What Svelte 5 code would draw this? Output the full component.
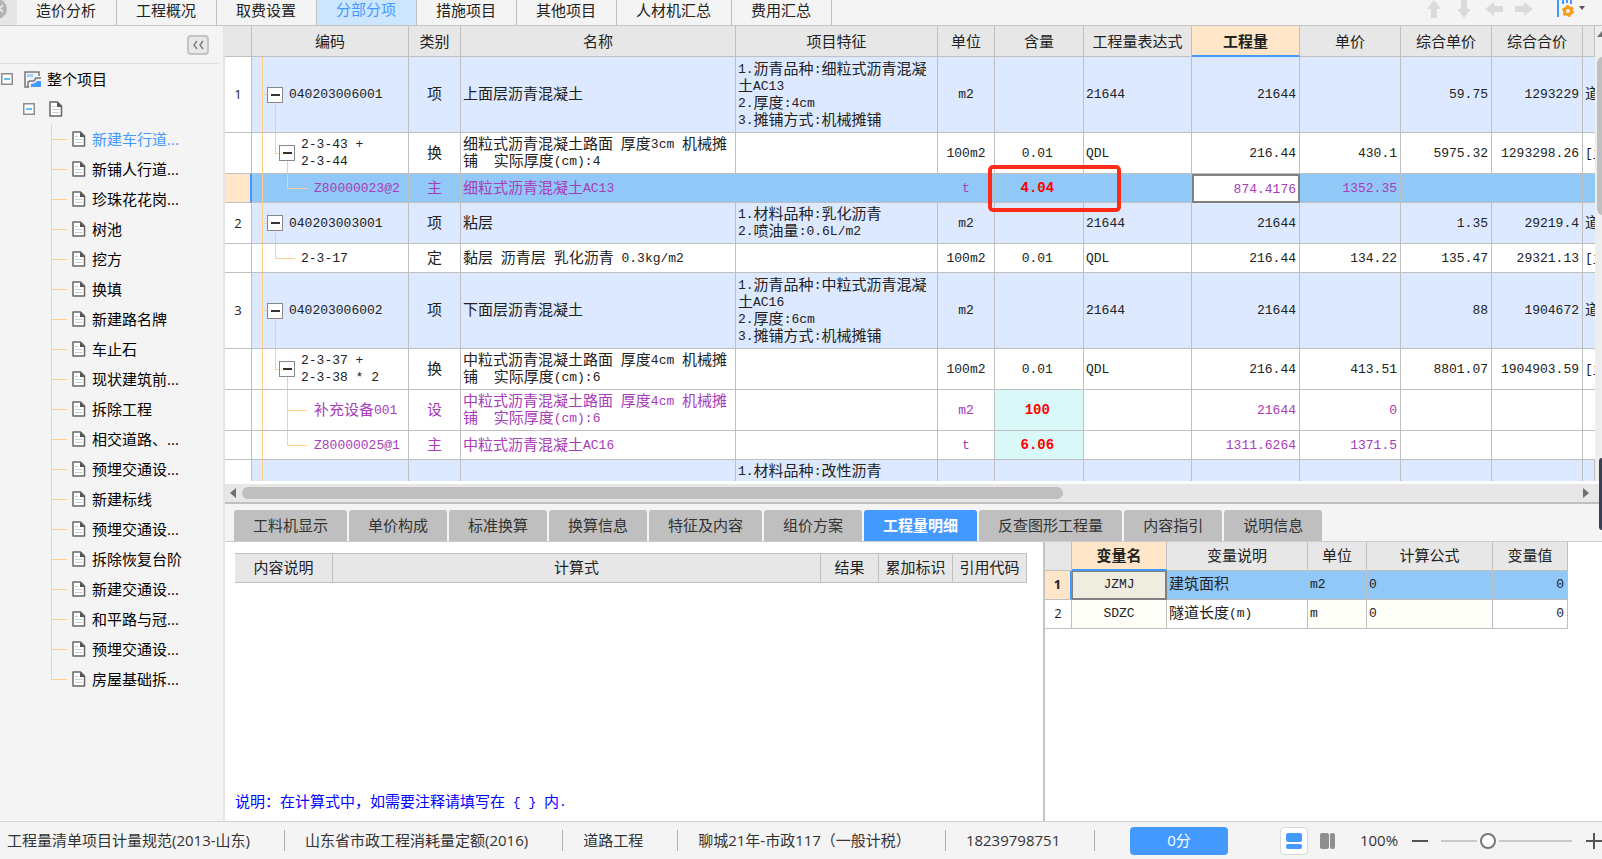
<script lang="ts">
    type Row = {
        no?: string;
        level: 1 | 2 | 3;
        open?: boolean;
        last?: boolean;
        code: string[];
        kind: string;
        name: string[];
        features?: string[];
        unit: string;
        content?: string;
        expr?: string;
        qty?: string;
        price?: string;
        unitPrice?: string;
        total?: string;
        rest?: string;
        selected?: boolean;
    };

    const topTabs = ["造价分析", "工程概况", "取费设置", "分部分项", "措施项目", "其他项目", "人材机汇总", "费用汇总"];
    let activeTop = $state("分部分项");

    const tree = [
        "新建车行道...", "新铺人行道...", "珍珠花花岗...", "树池", "挖方", "换填", "新建路名牌",
        "车止石", "现状建筑前...", "拆除工程", "相交道路、...", "预埋交通设...", "新建标线",
        "预埋交通设...", "拆除恢复台阶", "新建交通设...", "和平路与冠...", "预埋交通设...", "房屋基础拆...",
    ];
    let activeNode = $state(0);

    const columns = ["", "编码", "类别", "名称", "项目特征", "单位", "含量", "工程量表达式", "工程量", "单价", "综合单价", "综合合价", ""];

    const rows: Row[] = [
        { no: "1", level: 1, open: true, code: ["040203006001"], kind: "项", name: ["上面层沥青混凝土"], features: ["1.沥青品种:细粒式沥青混凝", "土AC13", "2.厚度:4cm", "3.摊铺方式:机械摊铺"], unit: "m2", expr: "21644", qty: "21644", unitPrice: "59.75", total: "1293229", rest: "道" },
        { level: 2, open: true, code: ["2-3-43 +", "2-3-44"], kind: "换", name: ["细粒式沥青混凝土路面 厚度3cm 机械摊", "铺  实际厚度(cm):4"], unit: "100m2", content: "0.01", expr: "QDL", qty: "216.44", price: "430.1", unitPrice: "5975.32", total: "1293298.26", rest: "[土" },
        { level: 3, last: true, code: ["Z80000023@2"], kind: "主", name: ["细粒式沥青混凝土AC13"], unit: "t", content: "4.04", qty: "874.4176", price: "1352.35", selected: true },
        { no: "2", level: 1, open: true, code: ["040203003001"], kind: "项", name: ["粘层"], features: ["1.材料品种:乳化沥青", "2.喷油量:0.6L/m2"], unit: "m2", expr: "21644", qty: "21644", unitPrice: "1.35", total: "29219.4", rest: "道" },
        { level: 2, code: ["2-3-17"], kind: "定", name: ["黏层 沥青层 乳化沥青 0.3kg/m2"], unit: "100m2", content: "0.01", expr: "QDL", qty: "216.44", price: "134.22", unitPrice: "135.47", total: "29321.13", rest: "[土" },
        { no: "3", level: 1, open: true, code: ["040203006002"], kind: "项", name: ["下面层沥青混凝土"], features: ["1.沥青品种:中粒式沥青混凝", "土AC16", "2.厚度:6cm", "3.摊铺方式:机械摊铺"], unit: "m2", expr: "21644", qty: "21644", unitPrice: "88", total: "1904672", rest: "道" },
        { level: 2, open: true, code: ["2-3-37 +", "2-3-38 * 2"], kind: "换", name: ["中粒式沥青混凝土路面 厚度4cm 机械摊", "铺  实际厚度(cm):6"], unit: "100m2", content: "0.01", expr: "QDL", qty: "216.44", price: "413.51", unitPrice: "8801.07", total: "1904903.59", rest: "[土" },
        { level: 3, code: ["补充设备001"], kind: "设", name: ["中粒式沥青混凝土路面 厚度4cm 机械摊", "铺  实际厚度(cm):6"], unit: "m2", content: "100", qty: "21644", price: "0" },
        { level: 3, last: true, code: ["Z80000025@1"], kind: "主", name: ["中粒式沥青混凝土AC16"], unit: "t", content: "6.06", qty: "1311.6264", price: "1371.5" },
    ];

    const detailTabs = ["工料机显示", "单价构成", "标准换算", "换算信息", "特征及内容", "组价方案", "工程量明细", "反查图形工程量", "内容指引", "说明信息"];
    let activeDetail = $state("工程量明细");

    const variables = [
        { code: "JZMJ", desc: "建筑面积", unit: "m2", formula: "0", value: "0" },
        { code: "SDZC", desc: "隧道长度(m)", unit: "m", formula: "0", value: "0" },
    ];

    const status = ["工程量清单项目计量规范(2013-山东)", "山东省市政工程消耗量定额(2016)", "道路工程", "聊城21年-市政117（一般计税）", "18239798751"];
    let zoom = $state(34);

    // half-width runs are set in the monospaced face, the rest in the CJK face
    function runs(text: string) {
        return text.match(/[\x20-\x7e]+|[^\x20-\x7e]+/g) ?? [];
    }
</script>

{#snippet mixed(text: string)}
    {#each runs(text) as run}{#if /^[\x20-\x7e]/.test(run)}<span class="half">{run}</span>{:else}{run}{/if}{/each}
{/snippet}

{#snippet lines(list: string[])}
    {#each list as line}<div class="line">{@render mixed(line)}</div>{/each}
{/snippet}

{#snippet page()}
    <svg class="page" width="14" height="16" viewBox="0 0 14 16" aria-hidden="true">
        <path d="M1 1h7.500l4 4v10H1z" fill="#fff" stroke="#666" stroke-width="1.500" stroke-linejoin="round" />
        <path d="M8 1l5 5H8z" fill="#555" />
        <path d="M3 5.500h3M3 8.500h7.500M3 11.500h7.500" stroke="#ccc" />
    </svg>
{/snippet}

{#snippet toggle()}
    <svg width="12" height="12" viewBox="0 0 12 12" aria-hidden="true">
        <rect x=".75" y=".75" width="10.500" height="10.500" fill="#fff" stroke="#8c8c8c" stroke-width="1.500" />
        <path d="M3 6h6" stroke="#2ea8e6" stroke-width="1.500" />
    </svg>
{/snippet}

<div class="app">
    <nav class="top">
        <button class="back" aria-label="向左滚动">
            <svg width="16" height="26" viewBox="0 0 16 26" aria-hidden="true">
                <circle cx="-3" cy="9" r="10" fill="#b4b4b4" />
                <path d="M0 8l3-3M0 9l3 3" fill="none" stroke="#f4f4f4" stroke-width="1.500" />
            </svg>
        </button>
        {#each topTabs as tab}
            <button class="top-tab" class:active={tab === activeTop} onclick={() => (activeTop = tab)}>{tab}</button>
        {/each}
        <div class="tools">
            {#each [["上移", 0], ["下移", 180], ["左移", 270], ["右移", 90]] as [label, angle]}
                <button aria-label={String(label)}>
                    <svg width="20" height="20" viewBox="0 0 20 20" aria-hidden="true">
                        <path d="M10 1l7 9h-4v9H7v-9H3z" fill="#dadada" transform="rotate({angle} 10 10)" />
                    </svg>
                </button>
            {/each}
            <button class="config" aria-label="列设置">
                <svg width="30" height="20" viewBox="0 0 30 20" aria-hidden="true">
                    <path d="M1 0h2v18H1zM6 0h2v5H6zM10 0h2v4h-2zM14 0h2v5h-2z" fill="#4499ff" />
                    <circle cx="12" cy="12" r="3.500" fill="none" stroke="#f99b1c" stroke-width="3" />
                    <circle cx="12" cy="12" r="5" fill="none" stroke="#f99b1c" stroke-width="2" stroke-dasharray="2.600 2.636" />
                    <path d="M23 7h6l-3 4z" fill="#555" />
                </svg>
            </button>
        </div>
    </nav>

    <div class="body">
        <aside class="side">
            <div class="side-head">
                <button class="fold" aria-label="收起">
                    <svg width="14" height="12" viewBox="0 0 14 12" aria-hidden="true">
                        <path d="M6 2L3 6l3 4M12 2L9 6l3 4" fill="none" stroke="#808080" stroke-width="1.500" />
                    </svg>
                </button>
            </div>
            <div class="node root">
                {@render toggle()}
                <svg width="17" height="17" viewBox="0 0 17 17" aria-hidden="true">
                    <path d="M15 5V1H1v15h4" fill="none" stroke="#777" stroke-width="1.500" />
                    <path d="M3 3h6v3H3z" fill="#9fd0ff" />
                    <path d="M7 16v-3l4-1 2-2h4v6z" fill="#4499ff" />
                    <path d="M4 16v-5l2-1h4l2-3h5" fill="none" stroke="#777" stroke-width="1.500" />
                </svg>
                <span>整个项目</span>
            </div>
            <div class="node second">
                {@render toggle()}
                {@render page()}
            </div>
            <ul>
                {#each tree as item, i}
                    <li>
                        <button class="leaf" class:active={i === activeNode} onclick={() => (activeNode = i)}>
                            {@render page()}
                            <span>{item}</span>
                        </button>
                    </li>
                {/each}
            </ul>
        </aside>

        <main>
            <section class="upper">
                <div class="viewport">
                    <div class="clip">
                        <table class="grid">
                            <colgroup>
                                <col class="w-no" /><col class="w-code" /><col class="w-kind" /><col />
                                <col class="w-feat" /><col class="w-unit" /><col class="w-content" /><col class="w-qty" />
                                <col class="w-qty" /><col class="w-price" /><col class="w-sum" /><col class="w-sum" /><col class="w-rest" />
                            </colgroup>
                            <thead>
                                <tr>
                                    {#each columns as column}
                                        <th class:current={column === "工程量"}>{column}</th>
                                    {/each}
                                </tr>
                            </thead>
                            <tbody>
                                {#each rows as row}
                                    <tr
                                        class:item={row.level === 1}
                                        class:material={row.level === 3}
                                        class:tall={row.features?.length === 4}
                                        class:selected={row.selected}
                                    >
                                        <td class="no">{row.no ?? ""}</td>
                                        <td class="code level-{row.level}" class:open={row.open} class:last={row.last}>
                                            <div class="code-inner">
                                                {#if row.open}<button class="box" aria-label="折叠"></button>{/if}
                                                <div>{@render lines(row.code)}</div>
                                            </div>
                                        </td>
                                        <td class="center">{row.kind}</td>
                                        <td>{@render lines(row.name)}</td>
                                        <td>{@render lines(row.features ?? [])}</td>
                                        <td class="center">{@render mixed(row.unit)}</td>
                                        <td class="center content">
                                            {@render mixed(row.content ?? "")}
                                            {#if row.selected}<span class="mark"></span>{/if}
                                        </td>
                                        <td>{@render mixed(row.expr ?? "")}</td>
                                        <td class="num qty">{@render mixed(row.qty ?? "")}</td>
                                        <td class="num">{@render mixed(row.price ?? "")}</td>
                                        <td class="num">{@render mixed(row.unitPrice ?? "")}</td>
                                        <td class="num">{@render mixed(row.total ?? "")}</td>
                                        <td class="rest">{@render mixed(row.rest ?? "")}</td>
                                    </tr>
                                {/each}
                                <tr class="item tall partial">
                                    <td class="no"></td>
                                    <td class="code"></td>
                                    <td></td>
                                    <td></td>
                                    <td>{@render mixed("1.材料品种:改性沥青")}</td>
                                    {#each Array(8) as _}<td></td>{/each}
                                </tr>
                            </tbody>
                        </table>
                    </div>
                    <div class="vbar">
                        <svg width="7" height="31" viewBox="0 0 7 31" aria-hidden="true"><path d="M2 11l5-6v6z" fill="#707070" /></svg>
                        <span></span>
                    </div>
                </div>
                <div class="hbar">
                    <span class="arrow left"></span>
                    <div class="track"><span class="thumb"></span></div>
                    <span class="arrow right"></span>
                </div>
                <span class="handle"></span>
            </section>

            <section class="lower">
                <nav class="detail-tabs">
                    {#each detailTabs as tab}
                        <button class:active={tab === activeDetail} onclick={() => (activeDetail = tab)}>{tab}</button>
                    {/each}
                </nav>
                <div class="panes">
                    <div class="formula">
                        <table>
                            <colgroup>
                                <col class="f-desc" /><col /><col class="f-result" /><col class="f-flag" /><col class="f-flag" />
                            </colgroup>
                            <thead>
                                <tr><th>内容说明</th><th>计算式</th><th>结果</th><th>累加标识</th><th>引用代码</th></tr>
                            </thead>
                        </table>
                        <p>{@render mixed("说明：在计算式中，如需要注释请填写在 { } 内.")}</p>
                    </div>
                    <div class="vars">
                        <table>
                            <colgroup>
                                <col class="v-no" /><col class="v-code" /><col class="v-desc" /><col class="v-unit" /><col class="v-formula" /><col class="v-value" />
                            </colgroup>
                            <thead>
                                <tr><th></th><th class="current">变量名</th><th>变量说明</th><th>单位</th><th>计算公式</th><th>变量值</th></tr>
                            </thead>
                            <tbody>
                                {#each variables as v, i}
                                    <tr class:selected={i === 0}>
                                        <td class="no">{i + 1}</td>
                                        <td class="center tint var-code">{@render mixed(v.code)}</td>
                                        <td>{@render mixed(v.desc)}</td>
                                        <td class="tint">{@render mixed(v.unit)}</td>
                                        <td class="tint">{@render mixed(v.formula)}</td>
                                        <td class="num">{@render mixed(v.value)}</td>
                                    </tr>
                                {/each}
                            </tbody>
                        </table>
                    </div>
                </div>
            </section>
        </main>
    </div>

    <footer>
        {#each status as text}<span class="status">{text}</span>{/each}
        <button class="score">0分</button>
        <button class="view on" aria-label="上下视图">
            <svg width="16" height="16" viewBox="0 0 16 16" aria-hidden="true">
                <rect width="16" height="9" y="0" rx="2" fill="#4499ff" />
                <rect width="16" height="5" y="11" rx="2" fill="#4499ff" />
            </svg>
        </button>
        <button class="view" aria-label="左右视图">
            <svg width="16" height="16" viewBox="0 0 16 16" aria-hidden="true">
                <rect width="9" height="16" rx="2" fill="#8f8f8f" />
                <rect width="5" height="16" x="10" rx="2" fill="#8f8f8f" />
            </svg>
        </button>
        <span class="percent">100%</span>
        <button class="step" aria-label="缩小">
            <svg width="16" height="16" viewBox="0 0 16 16" aria-hidden="true"><path d="M0 8h16" stroke="#555" stroke-width="2" /></svg>
        </button>
        <input type="range" aria-label="缩放" bind:value={zoom} />
        <button class="step" aria-label="放大">
            <svg width="16" height="16" viewBox="0 0 16 16" aria-hidden="true"><path d="M0 8h16M8 0v16" stroke="#555" stroke-width="2" /></svg>
        </button>
    </footer>
</div>

<style>
    :global(body) {
        margin: 0;
        overflow: hidden;
    }

    .app {
        display: flex;
        flex-direction: column;
        height: 100vh;
        background: #f4f4f4;
        color: #222;
        font: 15px/17px "Open Sans", "Noto Sans CJK SC", sans-serif;
        overflow: hidden;
    }

    button {
        padding: 0;
        border: 0;
        background: none;
        color: inherit;
        font: inherit;
        white-space: nowrap;
    }

    svg {
        display: block;
        flex: none;
    }

    .top {
        display: flex;
        flex: none;
        height: 26px;
        border-bottom: 1px solid #c4c4c4;
        box-sizing: border-box;
    }

    .back {
        width: 17px;
        background: #e6e6e6;
        overflow: hidden;
    }

    .top-tab {
        padding: 0 20px 4px 19px;
        border-right: 1px solid #c0c0c0;
    }

    .top-tab.active {
        padding-bottom: 6px;
        background: #cce6ff;
        color: #4499ff;
    }

    .tools {
        display: flex;
        gap: 10px;
        margin: 0 16px 0 auto;
        padding-bottom: 8px;
        align-items: center;
    }

    .config {
        margin-left: 12px;
    }

    .body {
        display: flex;
        flex: 1;
        min-height: 0;
    }

    .side {
        flex: none;
        width: 225px;
        box-sizing: border-box;
        border-right: 2px solid #e4e4e4;
        color: #000;
    }

    .side-head {
        display: flex;
        justify-content: flex-end;
        align-items: center;
        height: 37px;
        margin-right: 4px;
        padding-right: 10px;
        border-bottom: 1px solid #dedede;
    }

    .fold {
        padding: 2px;
        border: 2px solid #c4c4c4;
        border-radius: 4px;
        background: #e8e8e8;
    }

    .node {
        display: flex;
        align-items: center;
        height: 30px;
    }

    .root {
        padding-left: 1px;
        gap: 6px;
    }

    .root svg:first-child {
        margin-right: 5px;
    }

    .second {
        padding-left: 23px;
        gap: 14px;
    }

    ul {
        margin: 0;
        padding: 0 0 0 51px;
        list-style: none;
    }

    li {
        display: flex;
        height: 30px;
        background:
            linear-gradient(#ffcf8f, #ffcf8f) 0 0 / 1px 100% no-repeat,
            linear-gradient(#ffcf8f, #ffcf8f) 0 50% / 16px 1px no-repeat;
    }

    li:last-child {
        background:
            linear-gradient(#ffcf8f, #ffcf8f) 0 0 / 1px 50% no-repeat,
            linear-gradient(#ffcf8f, #ffcf8f) 0 50% / 16px 1px no-repeat;
    }

    .leaf {
        display: flex;
        align-items: center;
        gap: 6px;
        margin-left: 21px;
    }

    .leaf.active {
        color: #4499ff;
    }

    main {
        display: flex;
        flex-direction: column;
        flex: 1;
        min-width: 0;
    }

    .upper {
        position: relative;
        display: flex;
        flex-direction: column;
        flex: 3 1 0;
        min-height: 0;
        box-sizing: border-box;
        border-bottom: 2px solid #c0c0c0;
        background: #fff;
    }

    .viewport {
        display: flex;
        flex: 1;
        min-height: 0;
        margin-bottom: 3px;
    }

    .clip {
        flex: 1;
        min-width: 0;
        overflow: hidden;
    }

    table {
        width: 100%;
        table-layout: fixed;
        border-collapse: separate;
        border-spacing: 0;
        font-family: "Noto Sans CJK SC", sans-serif;
    }

    th,
    td {
        height: 22px;
        padding: 1px 2px 5px;
        border: solid #c0c0c0;
        border-width: 0 1px 1px 0;
        text-align: left;
        white-space: pre;
    }

    th {
        height: 24px;
        padding: 2px 2px 4px;
        background: #e7e7e7;
        font-weight: normal;
        text-align: center;
    }

    th.current {
        border-bottom: 2px solid #4499ff;
        padding-bottom: 3px;
        background: #ffe6c8;
        font-weight: bold;
    }

    .line {
        height: 17px;
    }

    .half {
        font: 13px/13px "Liberation Mono", monospace;
        vertical-align: 1px;
    }

    .w-no { width: 27px; }
    .w-code { width: 157px; }
    .w-kind { width: 52px; }
    .w-feat { width: 202px; }
    .w-unit { width: 57px; }
    .w-content { width: 89px; }
    .w-qty { width: 108px; }
    .w-price { width: 101px; }
    .w-sum { width: 91px; }
    .w-rest { width: 12px; }

    .item td {
        background-color: #dce9ff;
    }

    .tall td {
        height: 69px;
    }

    .partial td {
        vertical-align: top;
    }

    .material td {
        color: #a83cb9;
    }

    .material .content {
        position: relative;
        background-color: #d9f8f8;
    }

    .material .content .half {
        color: #f00;
        font-size: 14px;
        font-weight: bold;
    }

    .selected td,
    .selected .content {
        background-color: #91c8f7;
    }

    td.no,
    .item td.no {
        padding: 3px 0;
        background-color: #fff;
        font: 13px/17px "Open Sans", sans-serif;
        text-align: center;
    }

    .selected td.no {
        border-right: 2px solid #4499ff;
        background-color: #ffe6c8;
    }

    .selected td.qty {
        border: 2px solid #808080;
        padding: 0 2px 3px 0;
        background: #fff;
    }

    td.center {
        text-align: center;
    }

    td.num {
        padding-right: 3px;
        text-align: right;
    }

    td.rest {
        border-right: 0;
        overflow: hidden;
    }

    .mark {
        position: absolute;
        z-index: 1;
        top: -9px;
        left: -7px;
        width: 125px;
        height: 39px;
        border: 4px solid #ff2a18;
        border-radius: 5px;
    }

    /* tree guides are painted behind the code cell */
    .code {
        --guide: linear-gradient(#ffcf8f, #ffcf8f);
        padding: 3px 2px;
        background: var(--guide) 10px 0 / 1px 100% no-repeat;
    }

    .code.level-1 {
        background:
            var(--guide) 10px 0 / 1px 100% no-repeat,
            var(--guide) 10px 50% / 6px 1px no-repeat,
            var(--guide) 23px 100% / 1px 50% no-repeat;
    }

    .code.level-2 {
        background:
            var(--guide) 10px 0 / 1px 100% no-repeat,
            var(--guide) 23px 0 / 1px 50% no-repeat,
            var(--guide) 23px 50% / 20px 1px no-repeat;
    }

    .code.level-2.open {
        background:
            var(--guide) 10px 0 / 1px 100% no-repeat,
            var(--guide) 23px 0 / 1px 50% no-repeat,
            var(--guide) 23px 50% / 6px 1px no-repeat,
            var(--guide) 35px 100% / 1px 50% no-repeat;
    }

    .code.level-3 {
        background:
            var(--guide) 10px 0 / 1px 100% no-repeat,
            var(--guide) 35px 0 / 1px 100% no-repeat,
            var(--guide) 35px 50% / 20px 1px no-repeat;
    }

    .code.level-3.last {
        background:
            var(--guide) 10px 0 / 1px 100% no-repeat,
            var(--guide) 35px 0 / 1px 50% no-repeat,
            var(--guide) 35px 50% / 20px 1px no-repeat;
    }

    .item .code,
    .item .code.level-1 {
        background-color: #dce9ff;
    }

    .selected .code.level-3 {
        background-color: #91c8f7;
    }

    .code-inner {
        display: flex;
        align-items: center;
        gap: 6px;
        padding-left: 13px;
    }

    .code-inner > div {
        padding-bottom: 3px;
        margin-top: -1px;
    }

    .level-2 .code-inner {
        padding-left: 47px;
    }

    .level-2.open .code-inner {
        padding-left: 25px;
    }

    .level-3 .code-inner {
        padding-left: 60px;
    }

    .code .code-inner {
        margin: -1px 0;
    }

    .box {
        flex: none;
        width: 16px;
        height: 16px;
        border: 1px solid #888;
        background: linear-gradient(#333, #333) 50% 50% / 9px 2px no-repeat #fff;
    }

    .vbar {
        width: 7px;
        background: #eee;
        overflow: hidden;
    }

    .vbar span {
        display: block;
        width: 12px;
        height: 158px;
        margin-left: 2px;
        border-radius: 6px;
        background: #bfbfbf;
    }

    .hbar {
        display: flex;
        align-items: center;
        gap: 6px;
        height: 18px;
        padding: 0 13px 0 5px;
        background: #e7e7e7;
    }

    .track {
        flex: 1;
    }

    .thumb {
        display: block;
        width: 61.5%;
        height: 12px;
        border-radius: 6px;
        background: #bfbfbf;
    }

    .arrow {
        border: 5px solid transparent;
    }

    .arrow.left {
        border-left-width: 0;
        border-right: 6px solid #707070;
    }

    .arrow.right {
        border-right-width: 0;
        border-left: 6px solid #707070;
    }

    .handle {
        position: absolute;
        z-index: 2;
        right: 0;
        bottom: -28px;
        width: 3px;
        height: 72px;
        border-radius: 3px 0 0 3px;
        background: #3b4050;
    }

    .lower {
        display: flex;
        flex-direction: column;
        flex: 2 1 0;
        min-height: 0;
    }

    .detail-tabs {
        display: flex;
        gap: 2px;
        padding: 6px 0 0 9px;
        border-bottom: 1px solid #ccc;
        color: #333;
    }

    .detail-tabs button {
        height: 31px;
        padding: 0 19px;
        border-radius: 3px 3px 0 0;
        background: #bfbfbf;
    }

    .detail-tabs .active {
        background: #4499ff;
        color: #fff;
        font-weight: bold;
    }

    .panes {
        display: flex;
        flex: 1;
        min-height: 0;
        background: #fff;
    }

    .formula {
        display: flex;
        flex-direction: column;
        justify-content: space-between;
        flex: 1;
        min-width: 0;
        padding: 11px 16px 12px 10px;
        border-right: 2px solid #c4c4c4;
    }

    .formula th {
        height: 22px;
        border-top-width: 1px;
    }

    .f-desc { width: 98px; }
    .f-result { width: 58px; }
    .f-flag { width: 74px; }

    .formula p {
        margin: 0;
        color: #00f;
        font-family: "Noto Sans CJK SC", sans-serif;
        white-space: pre;
    }

    .vars {
        flex: none;
        width: 557px;
    }

    .vars table {
        width: 523px;
    }

    .vars th {
        height: 22px;
    }

    .v-no { width: 27px; }
    .v-code { width: 95px; }
    .v-desc { width: 141px; }
    .v-unit { width: 59px; }
    .v-formula { width: 126px; }
    .v-value { width: 75px; }

    .tint {
        background: #fffffa;
    }

    .vars .selected .var-code {
        border: solid #808080;
        border-width: 1px 2px 2px 1px;
        padding: 0 1px 4px;
        background: #efeddf;
    }

    .vars .selected .no {
        font-weight: bold;
    }

    footer {
        display: flex;
        align-items: center;
        flex: none;
        height: 38px;
        border-top: 1px solid #d4d4d4;
        box-sizing: border-box;
        color: #333;
        white-space: nowrap;
    }

    .status {
        padding: 2px 34px 2px 20px;
        border-right: 1px solid #aab0b8;
    }

    .status:first-child {
        padding-left: 7px;
    }

    .score {
        width: 100px;
        height: 28px;
        margin: 0 52px 0 35px;
        border-radius: 4px;
        background: #4499ff;
        color: #fff;
    }

    .view {
        margin-right: 24px;
    }

    .view.on {
        margin-right: 12px;
        padding: 5px;
        border: 1px solid #d8d8d8;
        border-radius: 4px;
        background: #fff;
    }

    .percent {
        margin-right: 14px;
    }

    input[type="range"] {
        appearance: none;
        width: 134px;
        height: 16px;
        margin: 0 14px 0 13px;
        background: linear-gradient(#c8c8c8, #c8c8c8) 0 50% / 100% 2px no-repeat;
    }

    input[type="range"]::-webkit-slider-thumb {
        appearance: none;
        box-sizing: border-box;
        width: 16px;
        height: 16px;
        border: 2px solid #777;
        border-radius: 50%;
        background: #fff;
        box-shadow: 0 0 0 3px #f4f4f4;
    }

    .step {
        flex: none;
    }
</style>
